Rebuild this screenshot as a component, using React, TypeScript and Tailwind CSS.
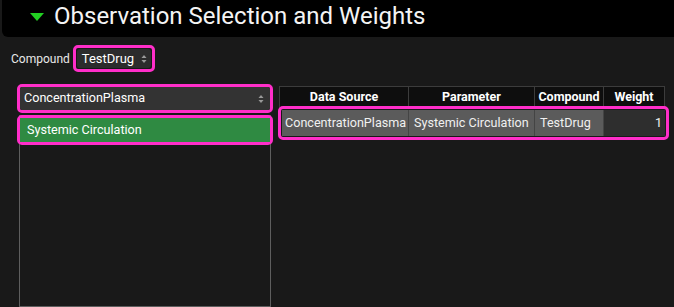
import React from "react";

function UpDown() {
  return (
    <svg width="6" height="10" viewBox="0 0 6 10" className="shrink-0">
      <path d="M0.5 4 L3 1 L5.5 4 Z" fill="#9a9a9a" />
      <path d="M0.5 6 L3 9 L5.5 6 Z" fill="#9a9a9a" />
    </svg>
  );
}

export default function App() {
  return (
    <div className="w-[674px] h-[307px] bg-[#191919] overflow-hidden text-white font-['Roboto',sans-serif]">
      <div className="h-[37px] ml-[2px] bg-black rounded-bl-[6px] flex items-center pl-[28px]">
        <svg width="14" height="8" viewBox="0 0 14 8" className="shrink-0 -mt-[4px]">
          <path d="M0 0 L14 0 L7 8 Z" fill="#22d022" />
        </svg>
        <span className="ml-[10px] text-[24px] leading-none -mt-[6px] text-[#f4f4f4]">
          Observation Selection and Weights
        </span>
      </div>

      <div className="flex items-center pl-[11px] mt-[8px]">
        <span className="text-[12px] text-[#e8e8e8]">Compound</span>
        <div className="ml-[3px] border-[3px] border-[#ff2ec9] rounded-[5px] w-[82px] h-[27px] flex">
          <div className="flex-1 m-[1px] bg-[#2c2c2c] rounded-[3px] flex items-center justify-between pl-[5px] pr-[4px]">
            <span className="text-[13px] text-white">TestDrug</span>
            <UpDown />
          </div>
        </div>
      </div>

      <div className="flex mt-[12px] pl-[17px] gap-[5px]">
        <div className="w-[256px] flex flex-col">
          <div className="border-[3px] border-[#ff2ec9] rounded-[5px] h-[29px] flex">
            <div className="flex-1 bg-[#333333] rounded-[2px] flex items-center justify-between pl-[4px] pr-[6px]">
              <span className="text-[12.6px] text-white">ConcentrationPlasma</span>
              <UpDown />
            </div>
          </div>
          <div className="mx-[2px] mt-[2px] h-[192px] border border-[#5e5e5e] bg-[#191919]">
            <div className="-mx-[3px] -mt-[1px] border-[3px] border-[#ff2ec9] rounded-[5px] h-[30px] flex">
              <div className="flex-1 bg-[#2f8a42] flex items-center pl-[7px]">
                <span className="text-[12.6px] text-white">Systemic Circulation</span>
              </div>
            </div>
          </div>
        </div>

        <div className="w-[391px] flex flex-col mt-[2px]">
          <div className="ml-[1px] w-[386px] h-[22px] flex bg-[#0e0e0e] border border-[#3c3c3c] text-[12.5px] font-bold text-white">
            <div className="w-[129px] flex items-center justify-center border-r border-[#3c3c3c]">Data Source</div>
            <div className="w-[126px] flex items-center justify-center border-r border-[#3c3c3c]">Parameter</div>
            <div className="w-[69px] flex items-center justify-center border-r border-[#3c3c3c]">Compound</div>
            <div className="flex-1 flex items-center justify-center">Weight</div>
          </div>
          <div className="-mt-[2px] border-[3px] border-[#ff2ec9] rounded-[5px] h-[34px] flex p-[1px] text-[12.6px] text-[#f0f0f0]">
            <div className="w-[127px] bg-[#5b5b5b] flex items-center pl-[3px] border-r border-[#444] whitespace-nowrap">ConcentrationPlasma</div>
            <div className="w-[126px] bg-[#5b5b5b] flex items-center pl-[5px] border-r border-[#444] whitespace-nowrap">Systemic Circulation</div>
            <div className="w-[69px] bg-[#5b5b5b] flex items-center pl-[5px] border-r border-[#444]">TestDrug</div>
            <div className="flex-1 bg-[#2e2e2e] flex items-center justify-end pr-[3px]">1</div>
          </div>
        </div>
      </div>
    </div>
  );
}
